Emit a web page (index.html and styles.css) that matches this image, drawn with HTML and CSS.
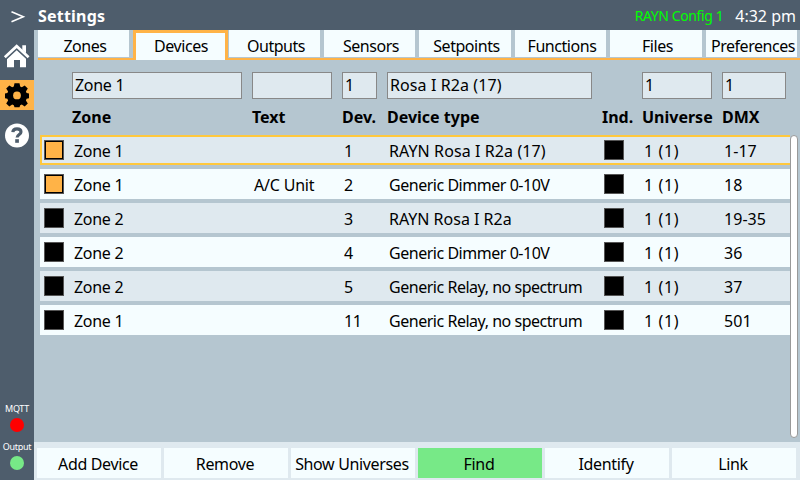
FILE: index.html
```
<!DOCTYPE html>
<html lang="en">
<head>
<meta charset="utf-8">
<title>Settings</title>
<link rel="stylesheet" href="styles.css">
</head>
<body>
<header class="topbar">
  <svg class="chevron" width="34" height="30" viewBox="0 0 34 30"><path d="M11.5 11.8 L23.3 16.8 L11.5 21.8" fill="none" stroke="#fff" stroke-width="1.6"/></svg>
  <h1 class="title">Settings</h1>
  <span class="config">RAYN Config 1</span>
  <span class="clock">4:32 pm</span>
</header>
<div class="body">
  <aside class="sidebar">
    <div class="nav"><svg width="34" height="30" viewBox="0 0 34 30"><path d="M7 18 L16.7 9.5 L26 18 V27.3 H20 V20 H14 V27.3 H7Z" fill="#fff"/><path d="M4.8 18 L16.7 7 L28.6 18" fill="none" stroke="#4e5d6c" stroke-width="4.6"/><path d="M4.8 17.2 L16.7 6.2 L28.6 17.2" fill="none" stroke="#fff" stroke-width="2.7"/><path d="M22.3 5.3h3.7v8l-3.7-3.4z" fill="#fff"/></svg></div>
    <div class="nav active"><svg width="34" height="30" viewBox="0 0 34 30"><path d="M14.5 3.2h5l.7 3.4 1.6.7 2.9-1.9 3.1 3.1-1.9 2.9.7 1.6 2.4.6v4.6l-2.4.6-.7 1.7 1.9 2.9-3.1 3.1-2.9-1.9-1.6.7-.7 2h-5l-.7-2-1.6-.7-2.9 1.9-3.1-3.1 1.9-2.9-.7-1.7-2.4-.6v-4.6l2.4-.6.7-1.6-1.9-2.9 3.1-3.1 2.9 1.9 1.6-.7z" fill="#000"/><circle cx="17" cy="15.4" r="3.9" fill="#ffb347"/></svg></div>
    <div class="nav"><svg width="34" height="30" viewBox="0 0 34 30"><circle cx="17" cy="15.4" r="12" fill="#fff"/><path d="M12.8 12.2 C13 9.6 15 8.9 17 8.9 C19.4 8.9 21 10 21 12 C21 14.5 17.1 14.4 17.1 17.6" fill="none" stroke="#4e5d6c" stroke-width="3.1"/><rect x="15.2" y="19.2" width="3.7" height="3.6" fill="#4e5d6c"/></svg></div>
    <div class="status">
      <span>MQTT</span><i class="led red"></i>
      <span>Output</span><i class="led green"></i>
    </div>
  </aside>
  <main class="main">
    <nav class="tabs">
      <span class="tab">Zones</span><span class="tab selected">Devices</span><span class="tab">Outputs</span><span class="tab">Sensors</span><span class="tab">Setpoints</span><span class="tab">Functions</span><span class="tab">Files</span><span class="tab">Preferences</span>
    </nav>
    <section class="grid filters">
      <span></span><span class="field">Zone 1</span><span class="field"></span><span class="field">1</span><span class="field wide">Rosa I R2a (17)</span><span></span><span class="field">1</span><span class="field">1</span>
    </section>
    <section class="grid heads">
      <span></span><span>Zone</span><span>Text</span><span>Dev.</span><span>Device type</span><span>Ind.</span><span>Universe</span><span>DMX</span>
    </section>
    <section class="list">
      <div class="rows">
        <div class="grid row current"><i class="box on"></i><span>Zone 1</span><span></span><span>1</span><span class="wide">RAYN Rosa I R2a (17)</span><i class="box"></i><span class="universe">1 (1)</span><span class="dmx">1-17</span></div>
        <div class="grid row"><i class="box on"></i><span>Zone 1</span><span class="label">A/C Unit</span><span>2</span><span class="generic">Generic Dimmer 0-10V</span><i class="box"></i><span class="universe">1 (1)</span><span class="dmx">18</span></div>
        <div class="grid row"><i class="box"></i><span>Zone 2</span><span></span><span>3</span><span class="rayn">RAYN Rosa I R2a</span><i class="box"></i><span class="universe">1 (1)</span><span class="dmx">19-35</span></div>
        <div class="grid row"><i class="box"></i><span>Zone 2</span><span></span><span>4</span><span class="generic">Generic Dimmer 0-10V</span><i class="box"></i><span class="universe">1 (1)</span><span class="dmx">36</span></div>
        <div class="grid row"><i class="box"></i><span>Zone 2</span><span></span><span>5</span><span class="generic">Generic Relay, no spectrum</span><i class="box"></i><span class="universe">1 (1)</span><span class="dmx">37</span></div>
        <div class="grid row"><i class="box"></i><span>Zone 1</span><span></span><span>11</span><span class="generic">Generic Relay, no spectrum</span><i class="box"></i><span class="universe">1 (1)</span><span class="dmx">501</span></div>
      </div>
      <div class="scrollbar"></div>
    </section>
    <footer class="actions">
      <span>Add Device</span><span>Remove</span><span>Show Universes</span><span class="find">Find</span><span>Identify</span><span>Link</span>
    </footer>
  </main>
</div>
</body>
</html>
```
FILE: styles.css
```
* { box-sizing: border-box; }
body { margin: 0; width: 800px; height: 480px; overflow: hidden; display: flex; flex-direction: column; font: 16px/20px "Noto Sans", sans-serif; letter-spacing: -0.3px; color: #000; background: #b5c6d0; white-space: nowrap; }
svg { display: block; }
.topbar { height: 30px; flex: none; display: flex; align-items: center; background: #4e5d6c; color: #fff; padding: 2px 4px 0 0; }
.chevron { margin-top: -2px; }
.title { margin: 0 auto 0 4px; font-size: 16px; letter-spacing: 0.2px; }
.config { color: #0f0; font-size: 14px; letter-spacing: -0.4px; margin-right: 12px; }
.clock { letter-spacing: 0; }
.body { flex: 1; display: flex; min-height: 0; }
.sidebar { width: 34px; background: #4e5d6c; display: flex; flex-direction: column; gap: 10px; padding-top: 10px; }
.nav { height: 30px; }
.active { background: #ffb347; }
.status { margin-top: auto; display: flex; flex-direction: column; align-items: center; color: #fff; font-size: 9px; line-height: 12px; padding-bottom: 10px; }
.led { width: 14px; height: 14px; border-radius: 50%; margin-top: 3px; }
.red { background: #f00; margin-bottom: 9px; }
.green { background: #77e987; }
.main { flex: 1; display: flex; flex-direction: column; min-width: 0; }
.tabs { height: 30px; flex: none; margin-left: 4px; display: grid; grid-template-columns: 91px 95px 91px 91px 92px 91px 92px 91px; column-gap: 4px; border-bottom: 2px solid #ffb347; letter-spacing: -0.45px; }
.tab { height: 27px; background: #f5fdff; text-align: center; line-height: 33px; padding-left: 3px; }
.tab.selected { height: 30px; border: 3px solid #ffb347; border-bottom: 0; line-height: 27px; padding-left: 1px; }
.tab:nth-child(n+3) { margin-left: -3px; margin-right: 3px; }
.grid { display: grid; grid-template-columns: 32px 180px 90px 45px 215px 40px 80px 68px; }
.filters { margin: 12px 0 0 6px; height: 25px; }
.field { border: 1px solid #888; background: #dfe9ef; margin-right: 10px; padding-left: 2px; line-height: 25px; }
.field:last-child { margin-right: 4px; }
.heads { margin: 10px 0 8px 6px; height: 20px; font-weight: bold; letter-spacing: 0; }
.list { flex: 1; min-height: 0; display: flex; margin: 0 2px 4px 6px; }
.rows { width: 750px; display: flex; flex-direction: column; gap: 4px; }
.row { height: 30px; align-items: center; background: #f5fdff; padding-top: 1px; }
.row:nth-child(odd) { background: #dfe9ef; }
.row span { padding-left: 2px; }
.wide { letter-spacing: 0.1px; }
.rayn { letter-spacing: 0; }
.label { letter-spacing: -0.2px; }
.generic { letter-spacing: -0.47px; }
.universe { letter-spacing: 0.6px; }
.dmx { letter-spacing: 0.05px; }
.current { box-shadow: inset 2px 2px #ffc83d, inset 0 -2px #ffc83d; }
.box { width: 20px; height: 20px; border: 1px solid #555; background: #000; margin: -1px 0 0 2px; }
.row .box:first-child { margin-left: 4px; }
.on { background: #ffb347; box-shadow: inset 0 0 0 1px #000; }
.scrollbar { width: 8px; border: 1px solid #999; border-radius: 4px; background: #fff; }
.actions { height: 38px; flex: none; display: grid; grid-template-columns: repeat(6, 124px); gap: 3px; background: #dfe9ef; padding: 6px 3px 2px; }
.actions span { height: 30px; background: #f5fdff; text-align: center; line-height: 32px; letter-spacing: -0.35px; padding-right: 2px; }
.actions .find { background: #77e987; }
```
